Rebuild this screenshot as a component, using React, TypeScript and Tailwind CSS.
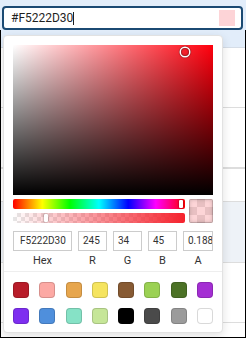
import React from 'react';

const presets = [
  '#b81d2a', '#fca9a4', '#e7a64d', '#f5e45f', '#875a33', '#9bd153', '#4c7226', '#a42ed3',
  '#7e2ef0', '#4f8fdc', '#86e2c6', '#c6e698', '#000000', '#4a4a4a', '#9b9b9b', '#ffffff',
];

const fields = [
  { label: 'Hex', value: 'F5222D30', width: 'w-[59px]' },
  { label: 'R', value: '245', width: 'w-[29px]' },
  { label: 'G', value: '34', width: 'w-[29px]' },
  { label: 'B', value: '45', width: 'w-[29px]' },
  { label: 'A', value: '0.18823529', width: 'w-[30px]' },
];

const ColorPopover: React.FC = () => (
  <div className="absolute left-[3px] top-[35px] w-[220px] bg-white rounded-[4px] border border-[#e2e2e2] shadow-[0_3px_10px_rgba(0,0,0,0.12)] px-[9px] pt-[9px] pb-[8px]">
    {/* saturation / value area */}
    <div className="relative h-[150px] bg-[#ff000d]">
      <div className="absolute inset-0 bg-[image:linear-gradient(to_right,#fff,rgba(255,255,255,0))]" />
      <div className="absolute inset-0 bg-[image:linear-gradient(to_top,#000,rgba(0,0,0,0))]" />
      <div className="absolute left-[168px] top-[3px] w-[8px] h-[8px] rounded-full shadow-[0_0_0_1.5px_#fff,inset_0_0_1px_1px_rgba(0,0,0,0.3),0_0_1px_2px_rgba(0,0,0,0.4)]" />
    </div>

    {/* sliders + preview */}
    <div className="mt-[4px] flex gap-[4px]">
      <div className="w-[172px] flex flex-col gap-[4px]">
        <div className="relative h-[10px] rounded-[2px] bg-[image:linear-gradient(to_right,#f00_0%,#ff0_17%,#0f0_33%,#0ff_50%,#00f_67%,#f0f_83%,#f00_100%)]">
          <div className="absolute left-[166px] top-[1px] w-[4px] h-[8px] rounded-[1px] bg-white shadow-[0_0_2px_rgba(0,0,0,0.6)]" />
        </div>
        <div className="relative h-[10px] rounded-[2px] overflow-hidden bg-[image:repeating-conic-gradient(#e6e6e6_0%_25%,#fff_0%_50%)] bg-size-[8px_8px]">
          <div className="absolute inset-0 bg-[image:linear-gradient(to_right,rgba(245,34,45,0),rgb(245,34,45))]" />
          <div className="absolute left-[31px] top-[1px] w-[4px] h-[8px] rounded-[1px] bg-white shadow-[0_0_2px_rgba(0,0,0,0.6)]" />
        </div>
      </div>
      <div className="relative w-[24px] h-[24px] rounded-[2px] overflow-hidden bg-[image:repeating-conic-gradient(#e6e6e6_0%_25%,#fff_0%_50%)] bg-size-[16px_16px]">
        <div className="absolute inset-0 bg-[#f5222d30] shadow-[inset_0_0_0_1px_rgba(0,0,0,0.15),inset_0_0_4px_rgba(0,0,0,0.25)]" />
      </div>
    </div>

    {/* inputs */}
    <div className="mt-[8px] flex gap-[6px]">
      {fields.map((f) => (
        <div key={f.label} className={`${f.width} flex flex-col items-center`}>
          <div className="w-full h-[20px] border border-[#cccccc] pl-[4px] text-[10px] leading-[18px] text-[#333] whitespace-nowrap overflow-hidden">
            {f.label === 'Hex' ? <span className="pl-[2px]">{f.value}</span> : f.value}
          </div>
          <div className="pt-[3px] pb-[4px] text-[11px] leading-[13px] text-[#333]">{f.label}</div>
        </div>
      ))}
    </div>

    {/* presets */}
    <div className="-mx-[9px] border-t border-[#eeeeee] px-[9px] pt-[10px]">
      <div className="grid grid-cols-8 gap-[10px]">
        {presets.map((c) => (
          <div
            key={c}
            className="w-[16px] h-[16px] rounded-[4px] shadow-[inset_0_0_0_1px_rgba(0,0,0,0.15)]"
            style={{ backgroundColor: c }}
          />
        ))}
      </div>
    </div>
  </div>
);

const App: React.FC = () => {
  return (
    <div className="relative w-[246px] h-[338px] overflow-hidden bg-white font-['Roboto',sans-serif]">
      <div className="h-[30px] bg-[#e2edfa] px-[2px] pt-[6px]">
        <div className="h-[24px] w-[241px] border-2 border-[#1b4a73] rounded-[4px] bg-white flex items-center pl-[7px] pr-[6px]">
          <span className="text-[12px] text-[#1f1f1f]">#F5222D30</span>
          <span className="w-[1px] h-[13px] bg-[#1f1f1f]" />
          <div className="ml-auto w-[16px] h-[16px] bg-[#fdd4d7]" />
        </div>
      </div>

      {/* table rows behind the popover */}
      <div className="h-[308px] flex flex-col border-x border-b border-black">
        <div className="h-[18px] bg-[#e2edfa] border-b border-[#d5dde7]" />
        <div className="h-[60px] border-b border-[#dddddd]" />
        <div className="h-[61px] border-b-2 border-[#dddddd]" />
        <div className="h-[33px] border-b border-[#dddddd]" />
        <div className="h-[61px] bg-[#eef2f7] border-b border-[#dddddd]" />
        <div className="h-[60px] border-b border-[#dddddd]" />
        <div className="flex-1" />
      </div>

      <ColorPopover />
    </div>
  );
};

export default App;
